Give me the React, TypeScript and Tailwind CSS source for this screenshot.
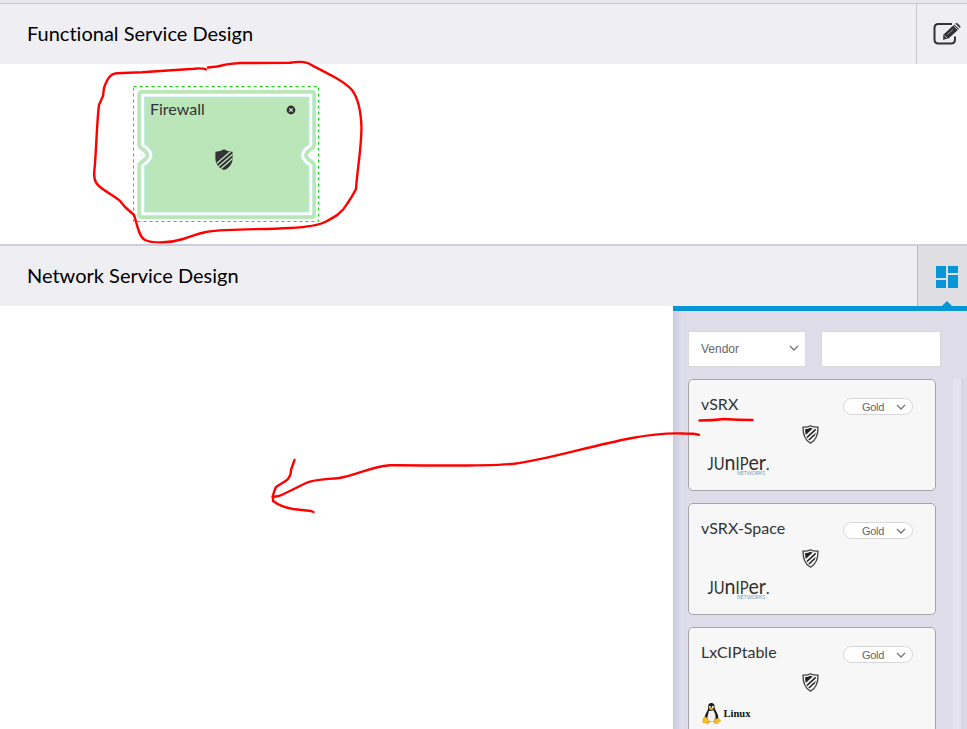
import React from "react";

const cards = [
  { name: "vSRX", vendor: "juniper" },
  { name: "vSRX-Space", vendor: "juniper" },
  { name: "LxCIPtable", vendor: "linux" },
];

const nodeFrame =
  "M9 5.8H178.500Q181.200 5.800 181.200 8.500V59.500Q180.500 62 177.500 63.500Q174.500 65.200 173.500 67.500Q172.700 69.300 173.500 71Q174.500 73.200 177.500 75Q180.500 76.800 181.200 79V128.500Q181.200 131.300 178.500 131.300H9Q6.200 131.300 6.200 128.500V79Q7 76.800 10 75Q13 73.200 14 71Q14.800 69.300 14 67.500Q13 65.200 10 63.500Q7 62 6.200 59.500V8.500Q6.200 5.800 9 5.800z";

function Chevron({ className }: { className: string }) {
  return (
    <svg className={className} width="10" height="7" viewBox="0 0 10 7" fill="none" stroke="#777" strokeWidth="1.3">
      <path d="M1 1l4 4 4-4" />
    </svg>
  );
}

function StripedShield({ id, width, height }: { id: string; width: number; height: number }) {
  return (
    <svg width={width} height={height} viewBox="0 0 18 21" className="block">
      <clipPath id={id}>
        <path d="M9 0.2Q12 2.2 17.600 2.800V9.500C17.600 15 14 18.800 10 20.700H8C4 18.800 0.400 15 0.400 9.500V2.800Q6 2.200 9 0.200z" />
      </clipPath>
      <g clipPath={`url(#${id})`}>
        <rect width="18" height="21" fill="#333" />
        <path d="M-1 16.800L19 -0.500M1 19.500L20 3.200M3.500 21.800L21 6.600" stroke="#bbe6b9" strokeWidth="1.300" />
      </g>
    </svg>
  );
}

function OutlinedShield({ id }: { id: string }) {
  return (
    <svg width="17" height="19" viewBox="0 0 17 19" className="block">
      <path d="M8.5 0.8C6.4 2 3.8 2.3 1 2.2C0.9 9 2.5 14.8 8.5 18.2C14.5 14.8 16.1 9 16 2.2C13.2 2.3 10.6 2 8.5 0.8z" fill="#f7f7f7" stroke="#444" strokeWidth="1.3" />
      <clipPath id={id}>
        <path d="M8.5 2.8C7 3.700 5 4 3.100 4C3.200 9.5 4.3 13.7 8.5 16.2C12.7 13.7 13.8 9.5 13.9 4C12 4 10 3.700 8.5 2.8z" />
      </clipPath>
      <g clipPath={`url(#${id})`}>
        <path d="M2 2H12.200L2 11.800z" fill="#222" />
        <path d="M2.500 14.600L15 3.200M5.500 16.200L15 7.700" stroke="#222" strokeWidth="1.500" />
      </g>
    </svg>
  );
}

function JuniperLogo() {
  return (
    <svg width="66" height="24" viewBox="0 0 66 24" className="block overflow-visible" fontFamily="Lato, sans-serif">
      <text x="0.500" y="13.500" fontSize="16.500" fill="#30302f" textLength="62" lengthAdjust="spacingAndGlyphs">
        JU<tspan fontSize="22">n</tspan>IP<tspan fontSize="22">er</tspan>.
      </text>
      <text x="30" y="18.700" fontSize="5" fill="#72a0b8" textLength="28" lengthAdjust="spacingAndGlyphs">NETWORKS</text>
    </svg>
  );
}

function LinuxLogo() {
  return (
    <svg width="54" height="24" viewBox="0 0 54 24" className="block">
      <path d="M6.2 5.4C6 2.5 7 1 9.3 1C11.8 1 12.8 2.8 12.6 5.5C12.6 8 16.6 11.3 16.4 16.5L15.4 19.8H4.2L2.4 16C2.7 12 6.3 8.8 6.2 5.4z" fill="#171717" />
      <path d="M7 8.4Q9 9.8 11.4 8.1C12.2 10.6 14 12.5 13.6 16.2L12.3 19.5Q8.6 20.4 5.5 18.6C4.6 15 6.5 11.5 7 8.4z" fill="#f2f2f2" />
      <ellipse cx="8" cy="5" rx="0.9" ry="1.2" fill="#eee" />
      <ellipse cx="10.8" cy="5" rx="1" ry="1.2" fill="#eee" />
      <path d="M7 6.8L9.3 5.6L11.8 6.7L9.2 8.5z" fill="#efb21c" />
      <path d="M1 16.5L3.5 14.5L7.2 19.2Q8.2 21.7 5.8 21.8L0.8 20.5zM12.6 16.5Q14 18 16 16L19 18.8L14.7 21.8Q11.8 22.4 12.2 19.4z" fill="#f7bd22" stroke="#c48a16" strokeWidth="0.35" />
      <text x="21.500" y="14.800" fontSize="10.5" fontWeight="700" fill="#111" fontFamily="'Liberation Serif', serif" textLength="27" lengthAdjust="spacingAndGlyphs">Linux</text>
    </svg>
  );
}

function FirewallNode() {
  return (
    <div className="absolute left-[133px] top-[22px] h-[136px] w-[187px]">
      <svg className="absolute inset-0" width="187" height="136" viewBox="0 0 187 136" fill="none">
        <clipPath id="node-body">
          <rect x="8" y="8" width="171" height="121" />
        </clipPath>
        <rect x="0.5" y="0.5" width="185" height="135" stroke="#00f000" strokeDasharray="3 3" />
        <g clipPath="url(#node-body)">
          <path d={nodeFrame} fill="#bbe6b9" stroke="#c0ebee" strokeWidth="11" />
          <path d={nodeFrame} stroke="#fff" strokeWidth="9.400" />
        </g>
        <path d={nodeFrame} stroke="#c5efec" strokeWidth="4" />
        <path d={nodeFrame} stroke="#bbe6b9" strokeWidth="3.400" />
      </svg>
      <span className="absolute left-[17px] top-[13px] text-[16px] leading-5 text-[#333]">Firewall</span>
      <svg className="absolute left-[153px] top-[19px]" width="10" height="10" viewBox="0 0 10 10">
        <circle cx="5" cy="5" r="4.4" fill="#333" />
        <path d="M3.300 3.300l3.400 3.400m0-3.400L3.300 6.700" stroke="#d6eed5" strokeWidth="1.200" />
      </svg>
      <div className="absolute left-[82px] top-[63px]">
        <StripedShield id="firewall-stripes" width={18} height={21} />
      </div>
    </div>
  );
}

export default function App() {
  return (
    <div className="relative flex h-[729px] w-[967px] flex-col overflow-hidden bg-white font-['Lato',sans-serif] [font-variant-ligatures:none]">
      <div className="h-[4px] shrink-0 border-b border-[#c9c9dc] bg-[#e8e7f0]" />
      <header className="flex h-[60px] shrink-0 bg-[#efeef3]">
        <h1 className="flex-1 pl-[27px] pt-[14px] text-[20px] leading-[30px] text-black">Functional Service Design</h1>
        <button className="w-[51px] border-l border-[#c8c8cb] pl-[16px]">
          <svg width="28" height="24" viewBox="0 0 28 24" fill="none">
            <path d="M19 2H5.500Q1.500 2 1.500 6V17.500Q1.500 21.500 5.500 21.500H18Q22 21.500 22 17.500V14.500" stroke="#333" strokeWidth="2" />
            <path d="M10.500 12.500L21.200 2.500L26 7L15.500 16.500L10 17.800z" fill="#333" />
            <path d="M22.200 1.600Q23.500 .5 24.800 1.600L27.200 3.900Q28 5 26.900 6z" fill="#333" />
            <path d="M20.300 3.400l4.900 4.700M11.500 13.700l3 2.800" stroke="#efeef3" strokeWidth="0.8" />
            <path d="M14.200 12.700l6-5.500" stroke="#efeef3" strokeWidth="0.5" />
          </svg>
        </button>
      </header>
      <section className="relative h-[180px] shrink-0 bg-white">
        <FirewallNode />
      </section>
      <header className="flex h-[62px] shrink-0 border-t-2 border-[#cfcee1] bg-[#efeef3]">
        <h2 className="flex-1 pl-[27px] pt-[14px] text-[20px] leading-[30px] text-black">Network Service Design</h2>
        <button className="relative w-[50px] border-l border-[#b9b9bd] bg-[#dfdee2] pl-[18px] pt-[2px]">
          <svg width="22" height="22" viewBox="0 0 22 22" fill="#0796d5">
            <path d="M0 0h10v12H0zM12 0h10v7H12zM0 14h10v8H0zM12 9h10v13H12z" />
          </svg>
          <svg className="absolute bottom-0 left-[24px]" width="10" height="5" viewBox="0 0 10 5" fill="#0796d5">
            <path d="M0 5L5 0l5 5z" />
          </svg>
        </button>
      </header>
      <main className="flex min-h-0 flex-1">
        <section className="flex-1 bg-white" />
        <aside className="flex w-[294px] flex-col border-t-[5px] border-[#0796d5] bg-[#dedce9]">
          <div className="flex min-h-0 flex-1 bg-[linear-gradient(to_right,#cbcbe0_0px,#dedce9_9px)] pl-[15px] pt-[20px]">
            <div className="w-[253px] shrink-0">
              <div className="flex gap-[15px]">
                <div className="flex h-[36px] w-[118px] items-center justify-between border border-[#d9d9dc] bg-white pl-[12px] pr-[6px] font-['Liberation_Sans',sans-serif] text-[12px] text-[#666]">
                  <span>Vendor</span>
                  <Chevron className="mb-[2px]" />
                </div>
                <input aria-label="Search" className="h-[36px] w-[120px] rounded-none border border-[#d9d9dc] bg-white px-2 outline-none" />
              </div>
              <div className="mt-[12px] flex flex-col gap-[12px]">
                {cards.map((card) => (
                  <article key={card.name} className="h-[112px] w-[248px] shrink-0 rounded-[5px] border border-[#a4a4a9] bg-[#f7f7f7]">
                    <div className="flex items-start justify-between pl-[12px] pr-[22px] pt-[14px]">
                      <h3 className="text-[16px] leading-[20px] text-[#333]">{card.name}</h3>
                      <div className="mt-[4px] flex h-[17px] w-[70px] items-center justify-between rounded-full border border-[#d7d7d7] bg-white pl-[18px] pr-[6px] font-['Liberation_Sans',sans-serif] text-[11px] text-[#666]">
                        <span className="pt-px tracking-[-0.3px]">Gold</span>
                        <Chevron className="mt-px" />
                      </div>
                    </div>
                    <div className="mt-[10px] pl-[113px]">
                      <OutlinedShield id={`shield-${card.name}`} />
                    </div>
                    <div className={card.vendor === "juniper" ? "mt-[12px] pl-[18px]" : "mt-[10px] pl-[13px]"}>
                      {card.vendor === "juniper" ? <JuniperLogo /> : <LinuxLogo />}
                    </div>
                  </article>
                ))}
              </div>
            </div>
            <div className="ml-[12px] mt-[48px] w-[8px] bg-[#e5e3ef]" />
            <div className="mt-[48px] flex-1 bg-[linear-gradient(to_right,#d5d4e2,#dedce9)]" />
          </div>
        </aside>
      </main>
      <svg className="pointer-events-none absolute inset-0" width="967" height="729" viewBox="0 0 967 729" fill="none" stroke="#ff0000" strokeWidth="2.400" strokeLinecap="round" strokeLinejoin="round">
        <path d="M206 69.300Q201 67.800 194 68.800L142 72.300L117 73.300C110 73.800 107 79 104 88L103 96L99 105C97 120 96.500 145 94.800 166C93.500 176 94 182 99 186C106 192 114 196 120 201L125 207L134 215C137 223 138.500 237 145 240C154 244 172 242.500 183 239C193 236 197 233.500 206 232C231 228 260 230 290 228Q317 226.500 325 222C335 217 342 213 347 204Q352 197 356 189C357 172 361 152 361.500 128C361 111 358 98 352 90C344 81 327 73 307 62.800Q301 61 290 62.800L240 63Q228 63.500 217 66.500L208 67.500" />
        <path d="M699.500 420.500Q713 420.500 724 419Q737 420 752.500 420" />
        <path d="M699 434.800Q694 433.500 684 433.500Q661 432.500 632 438C590 446 545 460 514 463.800C475 467 423 465 390 465.300C369 467 355 476 339 478C323 479.500 315 479 306 483Q284 494 279 496L272.500 497L274 492L276 487L287 480Q291 476 291 470L294.500 460M273 497V501Q281 507 293 509L311 511L313.500 512" />
      </svg>
    </div>
  );
}
